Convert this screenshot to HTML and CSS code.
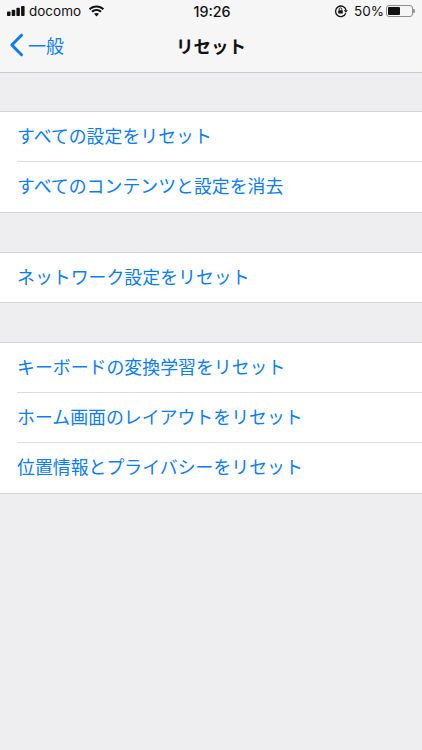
FILE: index.html
```html
<!DOCTYPE html>
<html lang="ja">
<head>
<meta charset="utf-8">
<title>リセット</title>
<link rel="stylesheet" href="styles.css">
</head>
<body>
<header class="top">
  <div class="status">
    <div class="status-left">
      <svg class="signal" width="18" height="10" viewBox="0 0 18 10"><rect x="0" y="5.500" width="3.500" height="4.500" rx=".8"/><rect x="4.700" y="3.700" width="3.500" height="6.300" rx=".8"/><rect x="9.400" y="1.800" width="3.500" height="8.200" rx=".8"/><rect x="14.100" y="0" width="3.500" height="10" rx=".8"/></svg>
      <span>docomo</span>
      <svg class="wifi" width="17" height="12" viewBox="0 0 17 12"><path d="M8.500 2.600c2.400 0 4.600.9 6.200 2.500l1.400-1.500C14.100 1.600 11.400.4 8.500.4S2.900 1.600.9 3.600l1.400 1.500C3.900 3.500 6.100 2.600 8.500 2.600z"/><path d="M8.500 6c1.500 0 2.800.6 3.800 1.500l1.400-1.500C12.300 4.700 10.500 3.900 8.500 3.900S4.700 4.700 3.300 6l1.400 1.500C5.700 6.600 7 6 8.500 6z"/><path d="M8.500 11.500l2.500-2.700c-.7-.5-1.600-.9-2.500-.9s-1.800.4-2.500.9z"/></svg>
    </div>
    <div class="clock">19:26</div>
    <div class="status-right">
      <svg class="lock" width="14" height="14" viewBox="0 0 14 14"><path d="M11.800 9.300A5.300 5.300 0 1 1 12 6" fill="none" stroke="#111" stroke-width="1.300"/><path d="M9.800 6.300h4l-2 2.500z"/><rect x="4.200" y="6.200" width="4.600" height="3.400" rx=".5"/><path d="M5.200 6.200V5.200a1.300 1.300 0 0 1 2.600 0v1" fill="none" stroke="#111" stroke-width=".9"/></svg>
      <span>50%</span>
      <div class="battery"><div class="battery-shell"><div class="battery-level"></div></div><div class="battery-cap"></div></div>
    </div>
  </div>
  <nav class="nav">
    <a class="back">
      <svg width="15" height="24" viewBox="0 0 15 24"><path d="M12.500 2.200L2.800 12l9.700 9.800" fill="none" stroke="#0a7cf5" stroke-width="3" stroke-linecap="round" stroke-linejoin="round"/></svg>
      <span>一般</span>
    </a>
    <h1>リセット</h1>
  </nav>
</header>
<main>
  <ul class="group">
    <li>すべての設定をリセット</li>
    <li>すべてのコンテンツと設定を消去</li>
  </ul>
  <ul class="group">
    <li>ネットワーク設定をリセット</li>
  </ul>
  <ul class="group">
    <li>キーボードの変換学習をリセット</li>
    <li>ホーム画面のレイアウトをリセット</li>
    <li>位置情報とプライバシーをリセット</li>
  </ul>
</main>
</body>
</html>
```
FILE: styles.css
```css
* { box-sizing: border-box; }
html, body { margin: 0; padding: 0; }
body {
  width: 422px;
  height: 750px;
  overflow: hidden;
  background: #eeeef0;
  font-family: "Noto Sans CJK JP", "Liberation Sans", sans-serif;
}
.top {
  height: 73px;
  background: #f6f6f6;
  border-bottom: 1px solid #c9c9cb;
}
.status {
  height: 24px;
  display: grid;
  grid-template-columns: 1fr auto 1fr;
  align-items: center;
  padding: 0 6px 2px;
  font-family: "Inter", "Liberation Sans", sans-serif;
  font-size: 13.500px;
  color: #111;
}
.status-left { display: flex; align-items: center; gap: 4px; }
.status-left .signal { margin-left: 1px; }
.status-left .wifi { margin-left: 3px; }
.signal, .wifi, .lock { fill: #111; display: block; }
.clock { font-weight: 500; font-size: 14.300px; margin-left: 2px; }
.status-right { display: flex; align-items: center; justify-content: flex-end; gap: 4px; }
.status-right .lock { margin-right: 2px; }
.battery { display: flex; align-items: center; margin-left: -2px; margin-right: 1px; }
.battery-shell {
  width: 27px;
  height: 12px;
  border: 1px solid #8d8d8d;
  border-radius: 3px;
  padding: 1px;
}
.battery-level { width: 12px; height: 8px; background: #111; border-radius: 1px; }
.battery-cap { width: 2px; height: 4px; background: #9a9a9a; border-radius: 0 1px 1px 0; }
.nav {
  position: relative;
  height: 48px;
  display: flex;
  align-items: center;
  justify-content: center;
  padding-bottom: 6px;
}
.back {
  position: absolute;
  left: 9px;
  top: 8px;
  display: flex;
  align-items: center;
  gap: 4px;
  color: #0a7cf5;
  font-size: 18px;
}
.back svg { display: block; }
.nav h1 { margin: 0; font-size: 17.500px; font-weight: 700; color: #111; }
main { padding-top: 38px; }
.group {
  list-style: none;
  margin: 0 0 39px;
  padding: 0 0 0 17px;
  background: #fff;
  border-top: 1px solid #d4d4d6;
  border-bottom: 1px solid #d4d4d6;
}
.group li {
  height: 50px;
  display: flex;
  align-items: center;
  padding-bottom: 4px;
  color: #0a7cf5;
  font-size: 17.900px;
  border-bottom: 1px solid #dcdcde;
}
.group li:last-child { border-bottom: 0; }
.group li:only-child { height: 49px; padding-bottom: 3px; }
```
